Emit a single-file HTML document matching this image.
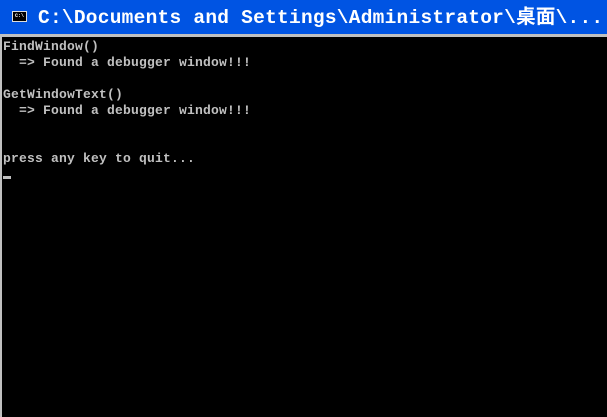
<!DOCTYPE html>
<html><head><meta charset="utf-8"><style>
html,body{margin:0;padding:0;width:607px;height:417px;overflow:hidden;background:#000}
.title{position:absolute;left:0;top:0;width:607px;height:34px;background:#0054e3}
.sep{position:absolute;left:0;top:34px;width:607px;height:3px;background:#c0c0c0}
.lb{position:absolute;left:0;top:37px;width:2px;height:380px;background:#c0c0c0}
.t{position:absolute;left:38px;top:5px;color:#fff;font:bold 19.5px/26px "Liberation Mono","Noto Sans CJK SC",monospace;letter-spacing:0.25px;white-space:pre}
.icon{position:absolute;left:12px;top:11px;width:15px;height:11px;background:#000;border:1px solid #ddd;box-sizing:border-box}
.icon span{position:absolute;left:2px;top:1px;color:#fff;font:bold 5px/6px "Liberation Mono",monospace}
.con{position:absolute;left:3px;top:39px;color:#c0c0c0;font:bold 13px/16px "Liberation Mono",monospace;letter-spacing:0.2px;white-space:pre}
.cur{position:absolute;left:3px;top:176px;width:8px;height:3px;background:#c0c0c0}
</style></head><body>
<div class="title"><div class="icon"><span>C:\</span></div><div class="t">C:\Documents and Settings\Administrator\桌面\...</div></div>
<div class="sep"></div><div class="lb"></div>
<div class="con">FindWindow()
  => Found a debugger window!!!

GetWindowText()
  => Found a debugger window!!!


press any key to quit...</div>
<div class="cur"></div>
</body></html>
